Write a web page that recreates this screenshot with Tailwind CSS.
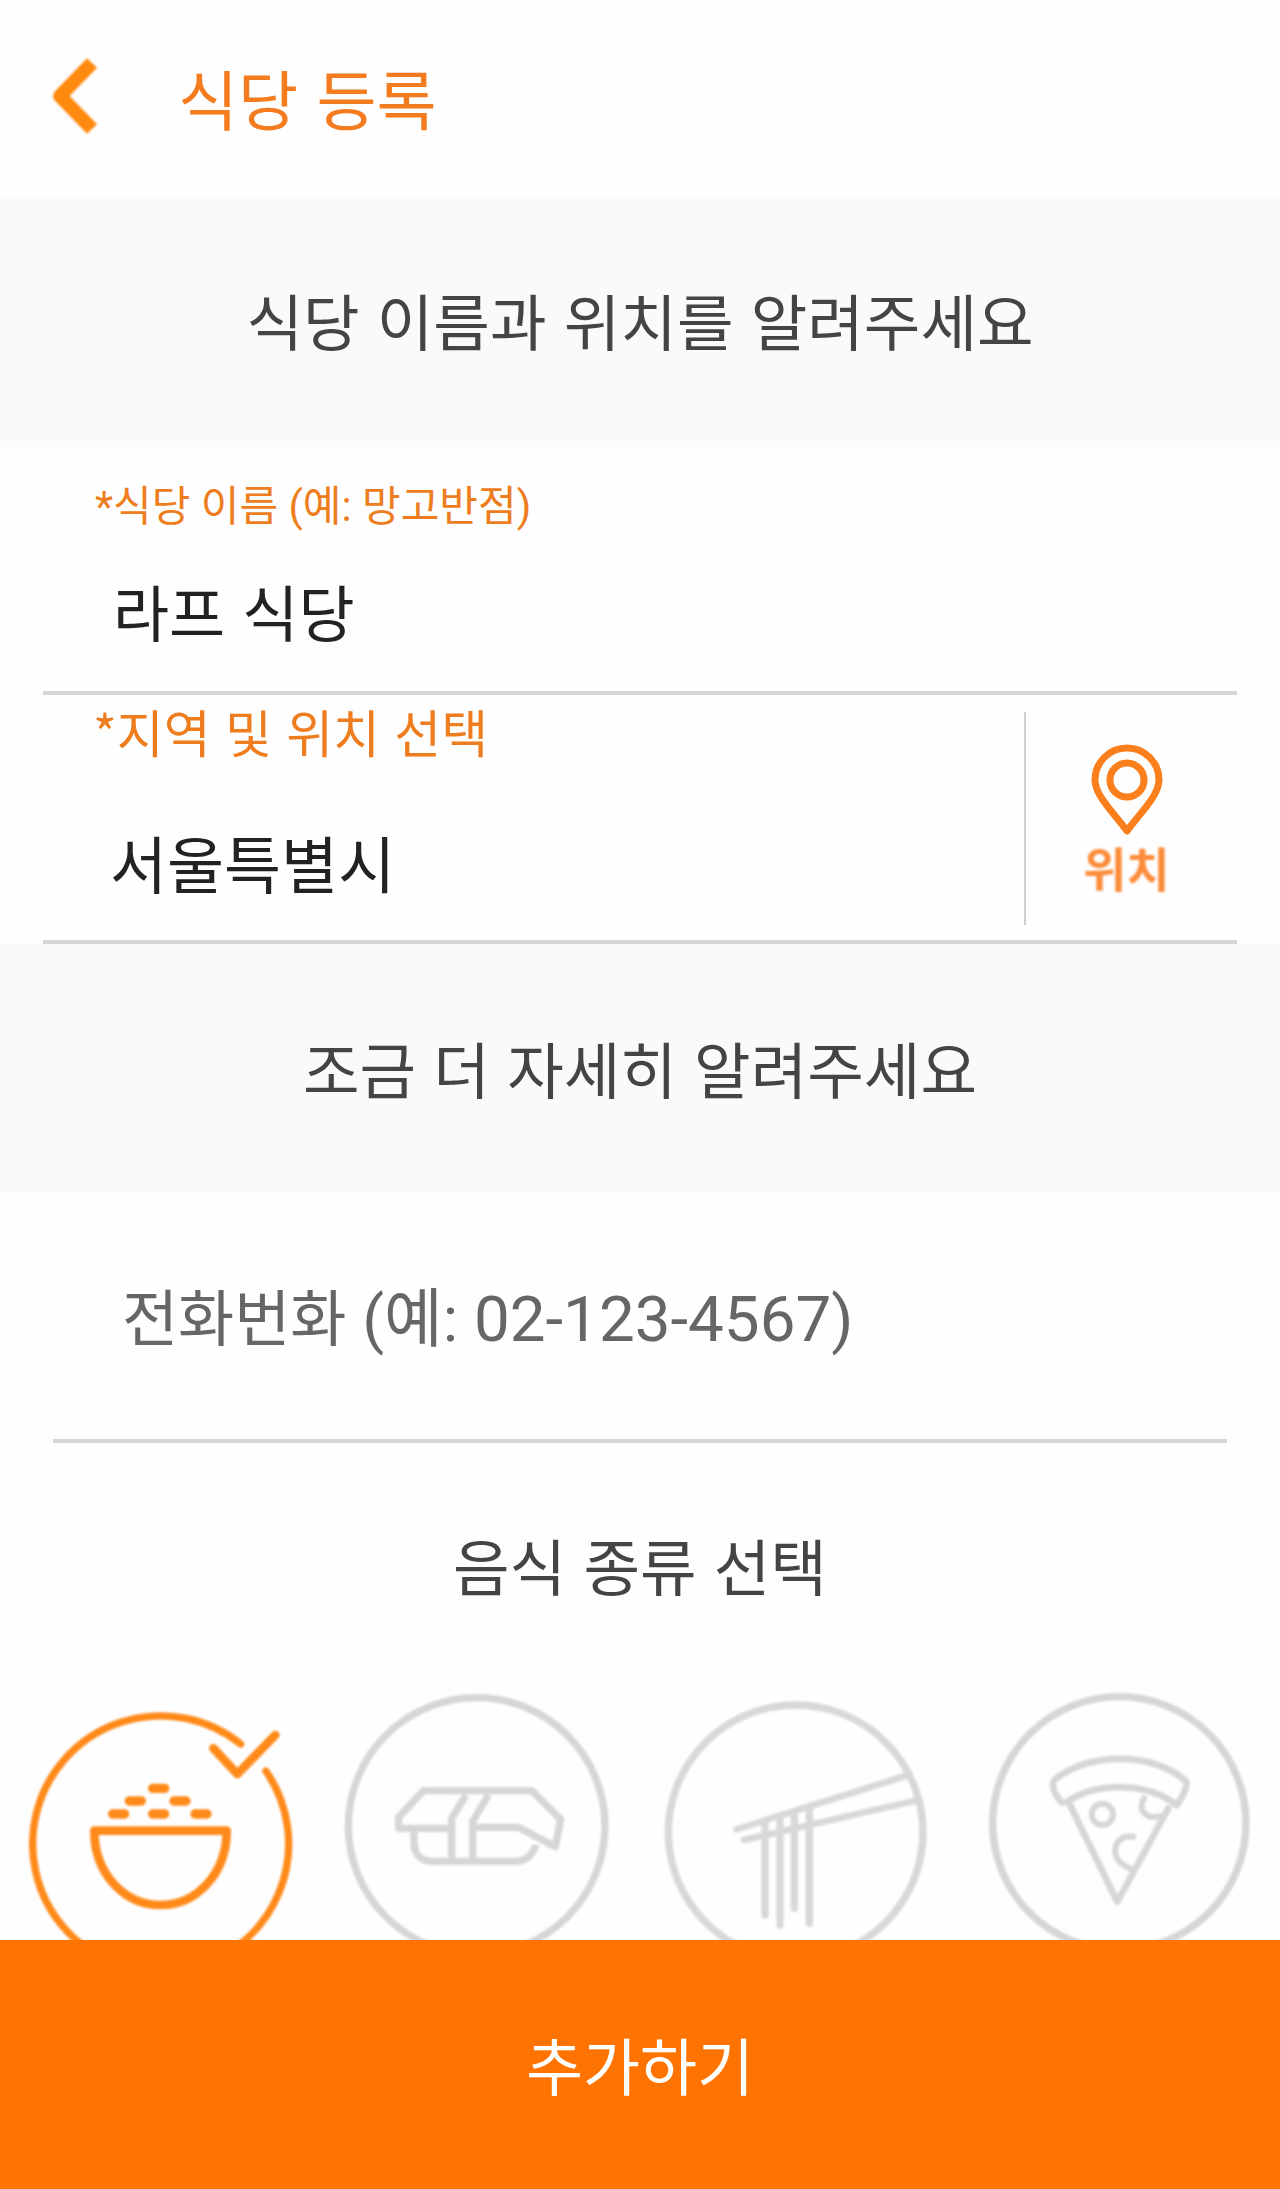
<!DOCTYPE html>
<html lang="ko">
<head>
<meta charset="utf-8">
<script src="https://cdn.jsdelivr.net/npm/@tailwindcss/browser@4"></script>
</head>
<body class="m-0 bg-white">
<div class="relative w-[1280px] h-[2189px] overflow-hidden bg-[#fefefe] font-['Roboto','Noto_Sans_CJK_KR',sans-serif]">
  <header class="h-[197px] flex items-center">
    <svg class="ml-[50px] w-[52px] h-[80px] mb-[5px] blur-[1px]" viewBox="0 0 52 80" fill="none"><path d="M42 7 L10 40 L42 73" stroke="#ff8a0f" stroke-width="14" stroke-linejoin="round"/></svg>
    <h1 class="ml-[76px] mb-[4px] text-[65.3px] leading-none font-normal text-[#f47c1e] font-['Noto_Sans_CJK_KR',sans-serif]">식당 등록</h1>
  </header>
  <section class="h-[250px] pb-[3px] bg-[#fafafa] flex items-center justify-center text-[61.5px] text-[#444] font-['Noto_Sans_CJK_KR',sans-serif]">식당 이름과 위치를 알려주세요</section>
  <div class="h-[248px] mx-[43px] border-b-4 border-[#d5d5d5] flex flex-col">
    <div class="ml-[52px] mt-[35px] text-[42px] leading-[50px] text-[#ee7d20]">*식당 이름 (예: 망고반점)</div>
    <div class="ml-[70px] mt-[44px] text-[61px] leading-[70px] text-[#222] font-['Noto_Sans_CJK_KR',sans-serif]">라프 식당</div>
  </div>
  <div class="h-[249px] mx-[43px] border-b-4 border-[#d5d5d5] flex">
    <div class="flex-1 flex flex-col">
      <div class="ml-[50px] mt-[6px] text-[51px] leading-[60px] text-[#ee7d20] font-['Noto_Sans_CJK_KR',sans-serif]">*지역 및 위치 선택</div>
      <div class="ml-[67px] mt-[66px] text-[62px] leading-[70px] text-[#222] font-['Noto_Sans_CJK_KR',sans-serif]">서울특별시</div>
    </div>
    <div class="w-[213px] my-[17px] mb-[15px] border-l-2 border-[#cfcfcf] flex flex-col items-center pr-[10px]">
      <svg class="mt-[32px] w-[80px] h-[92px] blur-[0.7px]" viewBox="0 0 80 92" fill="none" stroke="#fb7f1c"><path d="M40 87 C28 70 8 52 8 36 A32 32 0 0 1 72 36 C72 52 52 70 40 87 Z" stroke-width="7" stroke-linejoin="round"/><circle cx="40" cy="36" r="17" stroke-width="7"/></svg>
      <span class="mt-[6px] text-[47px] leading-[50px] font-bold text-[#fb8c3a] blur-[1px] font-['Noto_Sans_CJK_KR',sans-serif]">위치</span>
    </div>
  </div>
  <section class="h-[248px] bg-[#fafafa] flex items-center justify-center text-[61.5px] text-[#444] font-['Noto_Sans_CJK_KR',sans-serif]">조금 더 자세히 알려주세요</section>
  <div class="h-[251px] mx-[53px] border-b-4 border-[#d5d5d5] pl-[69px] pt-[88px] text-[63.7px] leading-[80px] text-[#666]"><span class="text-[61px]">전화번화</span> (예: 02-123-4567)</div>
  <div class="h-[122px] mt-[82px] text-center text-[61.5px] leading-[80px] text-[#444] font-['Noto_Sans_CJK_KR',sans-serif]">음식 종류 선택</div>
  <div class="absolute left-0 top-[1670px] flex w-[1280px]">
    <svg class="w-[320px] h-[300px] shrink-0 blur-[0.8px]" viewBox="0 0 960 900" fill="none" stroke="#ff8a1a" stroke-linecap="round" stroke-linejoin="round">
      <path d="M722 222 A384 384 0 1 0 797.6 303" stroke-width="22"/>
      <path d="M640 235 L712 312 L826 195" stroke-width="26"/>
      <path d="M458 355 H494 M388 393 H424 M522 393 H558 M338 432 H374 M458 432 H494 M585 432 H621" stroke-width="28"/>
      <path d="M283 482 H680 C680 610 590 705 482 705 C372 705 283 610 283 482 Z" stroke-width="26"/>
    </svg>
    <svg class="w-[320px] h-[300px] shrink-0 blur-[0.8px]" viewBox="0 0 960 900" fill="none" stroke="#d6d6d8" stroke-linejoin="round">
      <circle cx="470" cy="468" r="385" stroke-width="22"/>
      <path d="M390 475 H236 V442 L310 362 H635 L722 448 L706 530 L595 472 H465" stroke-width="22"/>
      <path d="M395 570 V445 L438 375 M458 570 V455 L505 375" stroke-width="22"/>
      <path d="M282 485 V515 C282 555 305 574 340 574 H590 C620 574 640 550 648 525" stroke-width="22"/>
    </svg>
    <svg class="w-[320px] h-[300px] shrink-0 blur-[0.8px]" viewBox="0 0 960 900" fill="none" stroke="#d8d8da" stroke-linecap="round">
      <circle cx="467" cy="487" r="382" stroke-width="22"/>
      <path d="M290 478 L805 315 M312 510 L825 392" stroke-width="20"/>
      <path d="M375 462 V735 M420 450 V765 M463 440 V715 M508 420 V760" stroke-width="22"/>
    </svg>
    <svg class="w-[320px] h-[300px] shrink-0 blur-[0.8px]" viewBox="0 0 960 900" fill="none" stroke="#d6d6d8" stroke-linejoin="round" stroke-linecap="round">
      <circle cx="478" cy="460" r="380" stroke-width="22"/>
      <path d="M305 398 C285 375 270 345 285 328 C390 245 580 245 680 335 C680 360 665 385 650 405 C560 335 410 335 322 395 Z" stroke-width="20"/>
      <path d="M330 405 L472 695 L625 415" stroke-width="20"/>
      <circle cx="427" cy="433" r="32" stroke-width="18"/>
      <path d="M552 385 C530 420 560 450 600 438 M520 500 C460 490 440 570 510 595" stroke-width="18"/>
    </svg>
  </div>
  <button class="absolute left-0 bottom-0 w-full h-[249px] bg-[#ff7300] text-white text-[62px] font-['Noto_Sans_CJK_KR',sans-serif]">추가하기</button>
</div>
</body>
</html>
